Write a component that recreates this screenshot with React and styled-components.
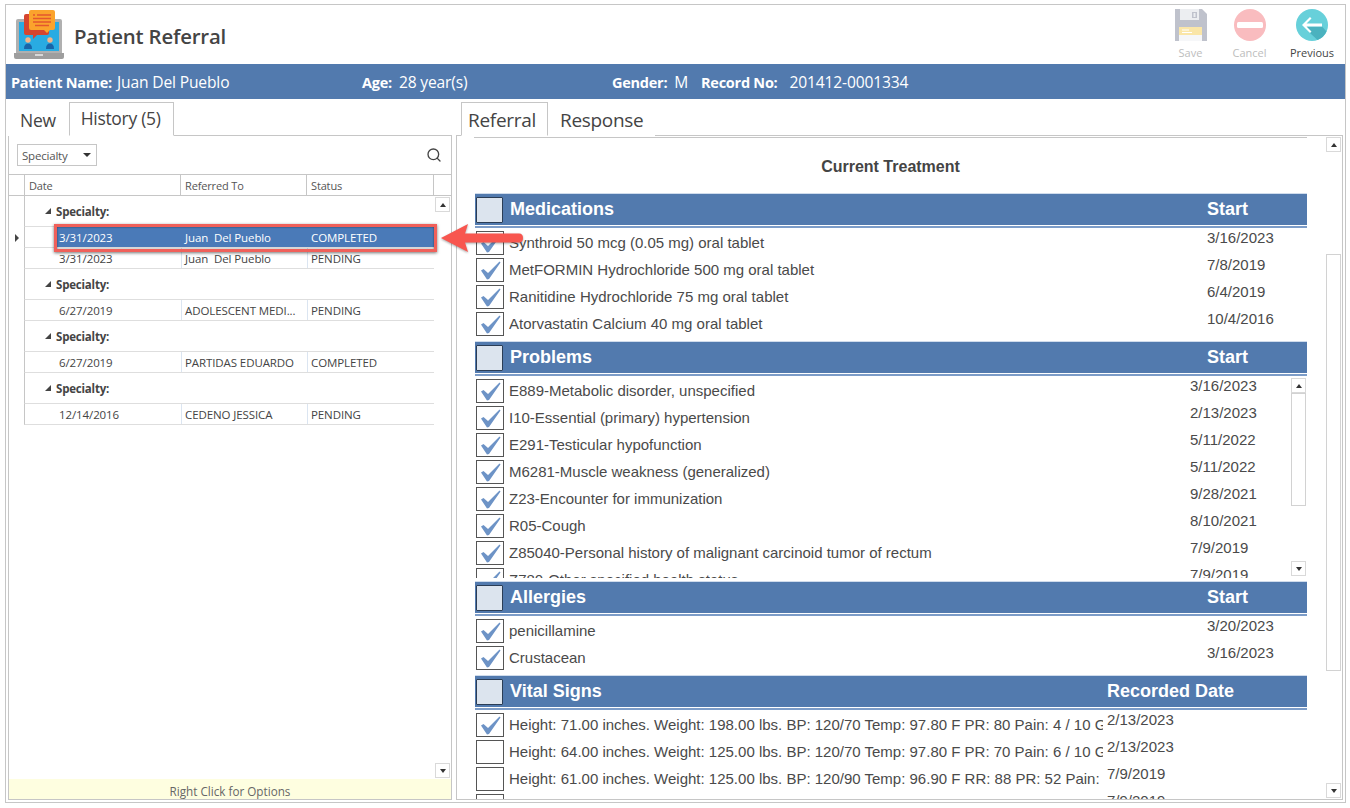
import styled, { createGlobalStyle } from 'styled-components';
import { FiSearch } from 'react-icons/fi';

const GlobalStyle = createGlobalStyle`
    html, body {
        margin: 0;
        padding: 0;
        background: #fff;
    }
    * { box-sizing: border-box; }
`

const UI_FONT = `"Open Sans", "Noto Sans", sans-serif`;
const FORM_FONT = `"Liberation Sans", Arial, sans-serif`;

const Frame = styled.div`
    position: relative;
    width: 1341px;
    height: 799px;
    margin: 4px 0 0 5px;
    border: 1px solid #c6c6c6;
    font-family: ${UI_FONT};
    color: #444;
    overflow: hidden;
`

const TopBar = styled.header`
    display: flex;
    align-items: flex-start;
    height: 59px;
    padding: 4px 0 0 8px;
`

const LogoMark = styled.svg`
    display: block;
    margin-top: 1px;
    flex-shrink: 0;
`

const PageTitle = styled.h1`
    margin: 12px 0 0 10px;
    font-size: 20.4px;
    line-height: 30px;
    font-weight: 600;
    color: #444;
    letter-spacing: -0.2px;
`

const Actions = styled.div`
    display: flex;
    margin-left: auto;
`

const Action = styled.div`
    display: flex;
    flex-direction: column;
    align-items: center;
    width: ${p => p.$width}px;
    font-size: 11px;
    line-height: 14px;
    color: ${p => p.$disabled ? '#bdbdbd' : '#444'};
    svg { display: block; margin-bottom: 5px; }
`

const PatientBar = styled.div`
    display: flex;
    align-items: center;
    height: 35px;
    padding-left: 5px;
    background: #527aae;
    color: #fff;
    font-size: 15.6px;
    letter-spacing: -0.15px;
    white-space: nowrap;
`

const PatientField = styled.div`
    width: ${p => p.$width}px;
    b {
        font-size: 14.5px;
        font-weight: 700;
        letter-spacing: -0.25px;
        margin-right: ${p => p.$gap}px;
    }
`

const Workspace = styled.div`
    display: flex;
    gap: 4px;
    height: 702px;
    padding: 2px 0 0 2px;
`

const Column = styled.section`
    display: flex;
    flex-direction: column;
    width: ${p => p.$width}px;
    height: 699px;
`

const TabStrip = styled.div`
    display: flex;
    align-items: flex-end;
    height: 34px;
    padding-left: ${p => p.$inset}px;
    flex-shrink: 0;
`

const Tab = styled.div`
    height: 100%;
    margin-bottom: -1px;
    padding: ${p => p.$padding};
    font-size: ${p => p.$size}px;
    line-height: 24px;
    letter-spacing: -0.3px;
    color: #444;
    z-index: 1;
    background: #fff;
    border: 1px solid ${p => p.$active ? '#c6c6c6' : 'transparent'};
    border-bottom-color: ${p => p.$active ? '#fff' : 'transparent'};
`

const Panel = styled.div`
    flex: 1;
    min-height: 0;
    display: flex;
    flex-direction: column;
    border: 1px solid #c6c6c6;
`

const GridTools = styled.div`
    display: flex;
    align-items: center;
    justify-content: space-between;
    height: 38px;
    padding: 0 9px 0 8px;
    flex-shrink: 0;
`

const SelectBox = styled.div`
    display: flex;
    align-items: center;
    justify-content: space-between;
    width: 80px;
    height: 22px;
    padding: 0 5px 0 4px;
    border: 1px solid #c6c6c6;
    font-size: 11.5px;
    letter-spacing: -0.2px;
    color: #555;
`

const Caret = styled.span`
    width: 0;
    height: 0;
    border-left: 4px solid transparent;
    border-right: 4px solid transparent;
    border-top: 4px solid #333;
`

const GridHead = styled.div`
    display: grid;
    grid-template-columns: 15px 156px 126px 127px 1fr;
    height: 22px;
    border-top: 1px solid #c6c6c6;
    border-bottom: 1px solid #c6c6c6;
    flex-shrink: 0;
    font-size: 11px;
    letter-spacing: -0.15px;
    color: #555;
`

const HeadCell = styled.div`
    display: flex;
    align-items: center;
    padding-left: 4px;
    border-left: ${p => p.$first ? '0' : '1px solid #c6c6c6'};
`

const GridBody = styled.div`
    flex: 1;
    min-height: 0;
    display: flex;
`

const GridRows = styled.div`
    width: 425px;
    align-self: flex-start;
`

const GroupRow = styled.div`
    display: flex;
    align-items: center;
    height: 31px;
    margin-left: 15px;
    padding: 0 0 0 20px;
    gap: 5px;
    border-left: 1px solid #c6c6c6;
    border-bottom: 1px solid #dedede;
    font-size: 11.5px;
    font-weight: 700;
    letter-spacing: -0.2px;
    color: #444;
`

const GroupTriangle = styled.span`
    width: 0;
    height: 0;
    border-left: 6px solid transparent;
    border-bottom: 6px solid #444;
`

const DataRow = styled.div`
    position: relative;
    display: grid;
    grid-template-columns: 156px 126px 1fr;
    height: 21px;
    margin-left: 15px;
    border-left: 1px solid #c6c6c6;
    border-bottom: 1px solid #dedede;
    font-size: 11.5px;
    letter-spacing: -0.1px;
    color: #444;
`

const RowPointer = styled.span`
    position: absolute;
    left: -10px;
    top: 7px;
    width: 0;
    height: 0;
    border-top: 4px solid transparent;
    border-bottom: 4px solid transparent;
    border-left: 4px solid #444;
`

const DataCell = styled.div`
    display: flex;
    align-items: center;
    white-space: pre;
    padding-left: ${p => p.$first ? (p.$selected ? 2 : 34) : (p.$selected ? 4 : 3)}px;
    margin-left: ${p => p.$selected && p.$first ? 32 : 0}px;
    background: ${p => p.$selected ? '#4a7ab8' : 'transparent'};
    color: ${p => p.$selected ? '#fff' : '#444'};
    border-left: ${p => p.$first || p.$selected ? '0' : '1px solid #dbe5f1'};
`

const Scrollbar = styled.div`
    position: relative;
    display: flex;
    flex-direction: column;
    justify-content: space-between;
    align-items: center;
    width: ${p => p.$width}px;
    margin: ${p => p.$margin};
    flex-shrink: 0;
`

const ScrollThumb = styled.div`
    position: absolute;
    top: ${p => p.$top}px;
    height: ${p => p.$height}px;
    width: 15px;
    border: 1px solid #d2d2d2;
    background: #fff;
`

const ScrollArrow = styled.div`
    display: flex;
    align-items: center;
    justify-content: center;
    width: 15px;
    height: 15px;
    border: 1px solid #d9d9d9;
    background: #fff;
    &::after {
        content: '';
        border-left: 3.5px solid transparent;
        border-right: 3.5px solid transparent;
        ${p => p.$down ? 'border-top: 4px solid #333;' : 'border-bottom: 4px solid #333;'}
    }
`

const Hint = styled.div`
    height: 20px;
    padding-top: 3px;
    flex-shrink: 0;
    background: #fefee0;
    text-align: center;
    font-size: 11.7px;
    line-height: 18px;
    color: #666;
    overflow: hidden;
`

const ChartPanel = styled(Panel)`
    flex-direction: row;
`

const Chart = styled.div`
    width: 850px;
    height: 100%;
    padding: 1px 0 0 18px;
    overflow: hidden;
    flex-shrink: 0;
    font-family: ${FORM_FONT};
`

const ChartTitle = styled.div`
    height: 56px;
    margin-left: -1px;
    padding-top: 20px;
    border-top: 1px solid #c6c6c6;
    text-align: center;
    font-size: 16px;
    line-height: 18px;
    font-weight: 700;
    color: #444;
`

const SectionBand = styled.div`
    display: grid;
    grid-template-columns: 28px 1fr ${p => p.$dateWidth}px;
    align-items: center;
    height: 36px;
    margin-top: ${p => p.$gap}px;
    padding-bottom: 4px;
    border-top: 1px solid #d0dcec;
    background: linear-gradient(to bottom, #527aae 0 31px, #fff 31px 32px, #7c9cc8 32px 34px, #fff 34px);
    color: #fff;
    font-size: 18px;
    font-weight: 700;
`

const BandBox = styled.span`
    width: 27px;
    height: 26px;
    margin-left: 1px;
    background: #dce4ee;
    border: 1.5px solid #2b3d55;
    border-radius: 1px;
`

const BandTitle = styled.span`
    padding-left: 7px;
`

const ListWrap = styled.div`
    display: flex;
    height: ${p => p.$height ? `${p.$height}px` : 'auto'};
    overflow: hidden;
`

const List = styled.div`
    flex: 1;
    min-width: 0;
`

const ItemRow = styled.div`
    display: grid;
    grid-template-columns: 34px 1fr ${p => p.$dateWidth}px;
    align-items: center;
    height: 27px;
    padding-bottom: 1px;
    font-size: 15px;
    color: #4a4a4a;
    white-space: nowrap;
`

const CheckBox = styled.span`
    display: block;
    width: 28px;
    height: 24px;
    margin-left: 1px;
    border: 1px solid #555;
    svg { display: block; }
`

const ItemText = styled.span`
    overflow: hidden;
    margin-right: 4px;
    padding-bottom: 1px;
`

const ItemDate = styled.span`
    padding-bottom: 11px;
`

const HighlightBox = styled.div`
    position: absolute;
    left: 48px;
    top: 219px;
    width: 383px;
    height: 28px;
    border: 3px solid #f0605a;
    box-shadow: 0 1px 3px rgba(0, 0, 0, 0.55), inset 0 0 2px rgba(0, 0, 0, 0.6);
`

const ArrowMark = styled.svg`
    position: absolute;
    left: 433px;
    top: 216px;
    filter: drop-shadow(0 1px 1px rgba(0, 0, 0, 0.35));
`

function Check(){
    return(
        <svg width="26" height="22" viewBox="0 0 26 22">
            <path d="M4 11.5 L6.5 10 L11 14 L22.5 2.5 L23.5 3.5 L12 20 L10 20.5 Z" fill="#6d93c6" />
        </svg>
    )
}

function LaptopLogo(){
    return(
        <LogoMark width="50" height="50" viewBox="0 0 50 50">
            <rect x="2" y="9" width="46" height="36" rx="2" fill="#b0b0b0" />
            <rect x="5" y="12" width="40" height="29" fill="#29abe2" />
            <path d="M0 43 H50 V47 Q50 49 48 49 H2 Q0 49 0 47 Z" fill="#9e9e9e" />
            <rect x="21" y="44" width="8" height="2" fill="#d8d8d8" />
            <path d="M12 4 H33 Q35 4 35 6 V23 Q35 25 33 25 H23 L19 29 V25 H12 Q10 25 10 23 V6 Q10 4 12 4 Z" fill="#d6452f" />
            <path d="M17 0 H39 Q41 0 41 2 V18 Q41 20 39 20 H36 L33 23 L30 20 H17 Q15 20 15 18 V2 Q15 0 17 0 Z" fill="#fba32c" />
            <path d="M19 5 H21 M23 5 H37 M19 8.5 H37 M19 12 H37 M21 15.5 H35" stroke="#e4572e" strokeWidth="1.3" />
            <circle cx="14" cy="30" r="2.7" fill="#f2b48a" />
            <path d="M10 39 Q10 33.5 14 33.5 Q18 33.5 18 39 Z" fill="#1864a8" />
            <circle cx="36" cy="30" r="2.7" fill="#f2b48a" />
            <path d="M32 39 Q32 33.5 36 33.5 Q40 33.5 40 39 Z" fill="#1864a8" />
        </LogoMark>
    )
}

function SaveIcon(){
    return(
        <svg width="32" height="32" viewBox="0 0 32 32">
            <path d="M0 0 H27 L32 5 V32 H0 Z" fill="#bfc2cc" />
            <rect x="5" y="0" width="19" height="11" fill="#eceef1" />
            <rect x="17" y="3" width="5" height="6" fill="#bfc2cc" />
            <rect x="18.5" y="4" width="2" height="4" fill="#eceef1" />
            <rect x="4" y="18" width="23" height="14" fill="#f6f7f9" />
            <rect x="4" y="18" width="23" height="8" fill="#fae6a8" />
            <path d="M7 21 H14 M7 23.5 H17" stroke="#fff" strokeWidth="1" />
        </svg>
    )
}

function CancelIcon(){
    return(
        <svg width="32" height="32" viewBox="0 0 32 32">
            <circle cx="16" cy="16" r="16" fill="#f9bcbf" />
            <rect x="3" y="13" width="26" height="6" rx="1.5" fill="#fff" />
        </svg>
    )
}

function PreviousIcon(){
    return(
        <svg width="32" height="32" viewBox="0 0 32 32">
            <circle cx="16" cy="16" r="16" fill="#67d0da" />
            <path d="M14 24 L10.5 17.5 H26 L30.5 22.5 A16 16 0 0 1 21.5 31 Z" fill="#4bb2bf" />
            <path d="M6 16 L14 8 L15.5 9.5 L10.5 14.5 H26 V17.5 H10.5 L15.5 22.5 L14 24 Z" fill="#fff" />
        </svg>
    )
}

const referrals = [
    { rows: [
        { date: '3/31/2023', to: 'Juan  Del Pueblo', status: 'COMPLETED', selected: true },
        { date: '3/31/2023', to: 'Juan  Del Pueblo', status: 'PENDING' },
    ]},
    { rows: [{ date: '6/27/2019', to: 'ADOLESCENT MEDI...', status: 'PENDING' }] },
    { rows: [{ date: '6/27/2019', to: 'PARTIDAS EDUARDO', status: 'COMPLETED' }] },
    { rows: [{ date: '12/14/2016', to: 'CEDENO JESSICA', status: 'PENDING' }] },
];

const sections = [
    { title: 'Medications', dateLabel: 'Start', dateWidth: 100, gap: 0, items: [
        ['Synthroid 50 mcg (0.05 mg) oral tablet', '3/16/2023', true],
        ['MetFORMIN Hydrochloride 500 mg oral tablet', '7/8/2019', true],
        ['Ranitidine Hydrochloride 75 mg oral tablet', '6/4/2019', true],
        ['Atorvastatin Calcium 40 mg oral tablet', '10/4/2016', true],
    ]},
    { title: 'Problems', dateLabel: 'Start', dateWidth: 100, listDateWidth: 101, gap: 4, listHeight: 201, nested: true, items: [
        ['E889-Metabolic disorder, unspecified', '3/16/2023', true],
        ['I10-Essential (primary) hypertension', '2/13/2023', true],
        ['E291-Testicular hypofunction', '5/11/2022', true],
        ['M6281-Muscle weakness (generalized)', '5/11/2022', true],
        ['Z23-Encounter for immunization', '9/28/2021', true],
        ['R05-Cough', '8/10/2021', true],
        ['Z85040-Personal history of malignant carcinoid tumor of rectum', '7/9/2019', true],
        ['Z780-Other specified health status', '7/9/2019', true],
    ]},
    { title: 'Allergies', dateLabel: 'Start', dateWidth: 100, gap: 3, items: [
        ['penicillamine', '3/20/2023', true],
        ['Crustacean', '3/16/2023', true],
    ]},
    { title: 'Vital Signs', dateLabel: 'Recorded Date', dateWidth: 200, gap: 4, items: [
        ['Height: 71.00 inches. Weight: 198.00 lbs. BP: 120/70 Temp: 97.80 F PR: 80 Pain: 4 / 10 G', '2/13/2023', true],
        ['Height: 64.00 inches. Weight: 125.00 lbs. BP: 120/70 Temp: 97.80 F PR: 70 Pain: 6 / 10 G', '2/13/2023', false],
        ['Height: 61.00 inches. Weight: 125.00 lbs. BP: 120/90 Temp: 96.90 F RR: 88 PR: 52 Pain:', '7/9/2019', false],
        ['Height: 61.00 inches. Weight: 125.00 lbs. BP: 120/80 Temp: 97.00 F RR: 88 PR: 60 Pain:', '7/9/2019', false],
    ]},
];

function Section({ section }){
    return(
        <>
            <SectionBand $dateWidth={section.dateWidth} $gap={section.gap}>
                <BandBox />
                <BandTitle>{section.title}</BandTitle>
                <span>{section.dateLabel}</span>
            </SectionBand>
            <ListWrap $height={section.listHeight}>
                <List>
                    {section.items.map(([text, date, checked]) => (
                        <ItemRow key={text} $dateWidth={section.listDateWidth || section.dateWidth}>
                            <CheckBox>{checked && <Check />}</CheckBox>
                            <ItemText>{text}</ItemText>
                            <ItemDate>{date}</ItemDate>
                        </ItemRow>
                    ))}
                </List>
                {section.nested &&
                    <Scrollbar $width={15} $margin='1px 1px 2px 0'>
                        <ScrollArrow />
                        <ScrollThumb $top={15} $height={113} />
                        <ScrollArrow $down />
                    </Scrollbar>
                }
            </ListWrap>
        </>
    )
}

export default function App(){
    return(
        <>
            <GlobalStyle />
            <Frame>
                <TopBar>
                    <LaptopLogo />
                    <PageTitle>Patient Referral</PageTitle>
                    <Actions>
                        <Action $width={59} $disabled><SaveIcon />Save</Action>
                        <Action $width={59} $disabled><CancelIcon />Cancel</Action>
                        <Action $width={66}><PreviousIcon />Previous</Action>
                    </Actions>
                </TopBar>
                <PatientBar>
                    <PatientField $width={351} $gap={5}><b>Patient Name:</b>Juan Del Pueblo</PatientField>
                    <PatientField $width={250} $gap={7}><b>Age:</b>28 year(s)</PatientField>
                    <PatientField $width={89} $gap={7}><b>Gender:</b>M</PatientField>
                    <PatientField $gap={12}><b>Record No:</b>201412-0001334</PatientField>
                </PatientBar>
                <Workspace>
                    <Column $width={444}>
                        <TabStrip $inset={0}>
                            <Tab $size={17.5} $padding='5px 12px 0 11px'>New</Tab>
                            <Tab $size={17.5} $padding='3px 12px 0 11px' $active>History (5)</Tab>
                        </TabStrip>
                        <Panel>
                            <GridTools>
                                <SelectBox>Specialty<Caret /></SelectBox>
                                <FiSearch size={16} color="#444" />
                            </GridTools>
                            <GridHead>
                                <HeadCell $first />
                                <HeadCell>Date</HeadCell>
                                <HeadCell>Referred To</HeadCell>
                                <HeadCell>Status</HeadCell>
                                <HeadCell />
                            </GridHead>
                            <GridBody>
                                <GridRows>
                                    {referrals.map((group, i) => (
                                        <div key={i}>
                                            <GroupRow><GroupTriangle />Specialty:</GroupRow>
                                            {group.rows.map(row => (
                                                <DataRow key={row.status + row.to}>
                                                    {row.selected && <RowPointer />}
                                                    <DataCell $first $selected={row.selected}>{row.date}</DataCell>
                                                    <DataCell $selected={row.selected}>{row.to}</DataCell>
                                                    <DataCell $selected={row.selected}>{row.status}</DataCell>
                                                </DataRow>
                                            ))}
                                        </div>
                                    ))}
                                </GridRows>
                                <Scrollbar $width={17} $margin='1px 0 1px 0'>
                                    <ScrollArrow />
                                    <ScrollArrow $down />
                                </Scrollbar>
                            </GridBody>
                            <Hint>Right Click for Options</Hint>
                        </Panel>
                    </Column>
                    <Column $width={887}>
                        <TabStrip $inset={5}>
                            <Tab $size={19} $padding='5px 11px 0 6px' $active>Referral</Tab>
                            <Tab $size={19} $padding='5px 11px 0'>Response</Tab>
                        </TabStrip>
                        <ChartPanel>
                            <Chart>
                                <ChartTitle>Current Treatment</ChartTitle>
                                {sections.map(section => <Section key={section.title} section={section} />)}
                            </Chart>
                            <Scrollbar $width={15} $margin='1px 0 1px 19px'>
                                <ScrollArrow />
                                <ScrollThumb $top={117} $height={417} />
                                <ScrollArrow $down />
                            </Scrollbar>
                        </ChartPanel>
                    </Column>
                </Workspace>
                <HighlightBox />
                <ArrowMark width="90" height="34" viewBox="0 0 90 34">
                    <path d="M2 17 L29 3 L26 12.5 H80 Q84 12.5 84 17 Q84 21.5 80 21.5 H26 L29 31 Z" fill="#f8564f" />
                </ArrowMark>
            </Frame>
        </>
    )
}
